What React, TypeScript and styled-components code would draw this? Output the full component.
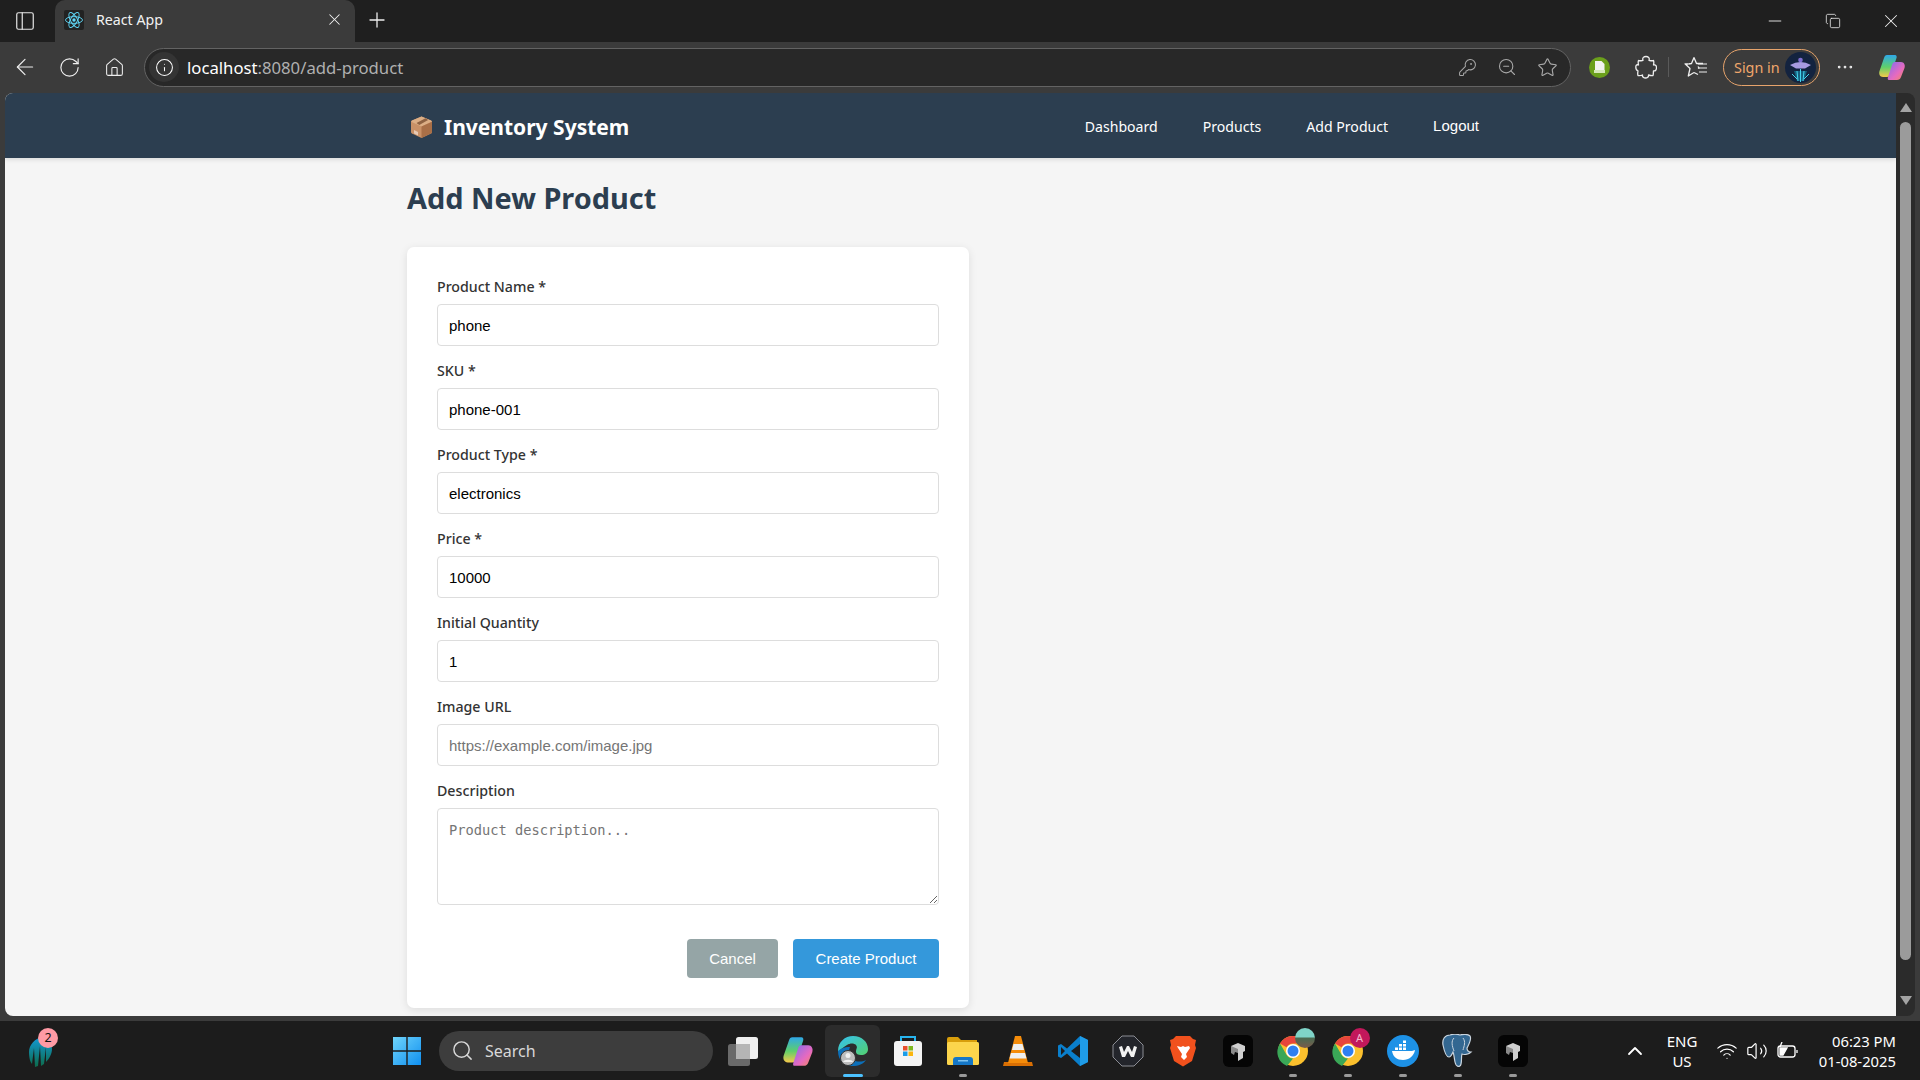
import React from "react";
import styled, { createGlobalStyle } from "styled-components";
import { ArrowLeft, RotateCw, Home, Info, KeyRound, ZoomOut, Star, X, Plus, Minus, Search, ChevronUp, Wifi, Volume2, MoreHorizontal, Copy, PanelLeft } from "lucide-react";

const Global = createGlobalStyle`
  html, body { margin: 0; padding: 0; height: 100%; overflow: hidden; background: #3b3b3b; }
  * { box-sizing: border-box; }
  ::placeholder { color: #757575; opacity: 1; }
`;

const UI = `"Noto Sans", "Open Sans", sans-serif`;
const ARIAL = `"Liberation Sans", Arial, sans-serif`;

const Screen = styled.div`
  width: 1920px; height: 1080px; display: flex; flex-direction: column; overflow: hidden;
  background: #3b3b3b; font-family: ${UI};
`;
const TabStrip = styled.div`
  height: 42px; flex: none; background: #1f1f1f; display: flex; align-items: stretch; color: #fff;
`;
const SideToggle = styled.div`
  width: 50px; margin-right: 5px; display: flex; align-items: center; justify-content: center; color: #e8e8e8;
`;
const Tab = styled.div`
  width: 300px; background: #3b3b3b; border-radius: 10px 10px 0 0; display: flex; align-items: center;
  padding: 0 11px 3px 9px; font-size: 14.2px; color: #f2f2f2;
`;
const TabTitle = styled.span`
  margin-left: 12px; flex: 1;
`;
const NewTab = styled.div`
  width: 44px; padding-bottom: 2px; display: flex; align-items: center; justify-content: center; color: #eee;
`;
const Spacer = styled.div`
  flex: 1;
`;
const WinBtn = styled.div`
  width: 58px; display: flex; align-items: center; justify-content: center; color: #eee;
`;
const Toolbar = styled.div`
  height: 51px; flex: none; background: #3b3b3b; display: flex; align-items: center; padding: 0 0 1px 2px; color: #eee;
`;
const ToolBtn = styled.div<{ $w?: number }>`
  width: ${p => p.$w ?? 45}px; height: 38px; flex: none; display: flex; align-items: center; justify-content: center;
`;
const Address = styled.div`
  width: 1427px; height: 39px; margin-left: 7px; flex: none; border: 1px solid #636363; border-radius: 20px; background: #282828;
  display: flex; align-items: center; padding: 0 3px 0 4px; color: #fff; font-size: 16.7px;
`;
const InfoChip = styled.div`
  width: 30px; height: 30px; border-radius: 50%; background: #343434; display: flex; align-items: center; justify-content: center; margin-right: 8px;
`;
const UrlHost = styled.span`
  color: #fff;
`;
const UrlRest = styled.span`
  color: #b0b0b0;
`;
const AddrIcon = styled.div`
  width: 40px; display: flex; justify-content: center; color: #a8a8a8;
`;
const Divider = styled.div`
  width: 1px; height: 20px; background: #5a5a5a; margin: 0 4px;
`;
const SignIn = styled.div`
  width: 97px; height: 37px; flex: none; border: 1px solid #e7a46c; border-radius: 19px; color: #f0a76c; font-size: 14.4px;
  display: flex; align-items: center; justify-content: space-between; padding: 0 3px 0 10px; margin-left: 4px;
`;
const ViewRow = styled.div`
  height: 923px; flex: none; display: flex; padding-left: 5px;
`;
const Page = styled.div`
  width: 1891px; height: 923px; background: #f5f5f5; border-radius: 8px 0 0 8px; overflow: hidden; display: flex; flex-direction: column;
`;
const NavBar = styled.nav`
  height: 65px; flex: none; background: #2c3e50; box-shadow: 0 2px 4px rgba(0,0,0,.1);
`;
const NavInner = styled.div`
  width: 1087px; height: 100%; margin: 0 auto; display: flex; align-items: center; justify-content: space-between; padding: 0 15px 0 3px;
`;
const Brand = styled.div`
  display: flex; align-items: center; gap: 11px; color: #fff; font-size: 21px; font-weight: 700; padding-top: 2px;
`;
const NavLinks = styled.div`
  display: flex; align-items: center; gap: 45px; padding-top: 1px;
`;
const NavLink = styled.a`
  color: #fff; font-size: 14.1px; text-decoration: none;
`;
const LogoutBtn = styled.button`
  background: none; border: 0; padding: 0 0 2px; color: #fff; font: 15px ${ARIAL};
`;
const Main = styled.main`
  width: 1087px; margin: 0 auto; padding-top: 20px;
`;
const Title = styled.h1`
  margin: 0 0 30px; height: 39px; line-height: 39px; font-size: 28.9px; font-weight: 700; color: #2c3e50;
`;
const Card = styled.form`
  width: 562px; height: 761px; background: #fff; border-radius: 7px; padding: 30px 30px 30px; box-shadow: 0 2px 9px rgba(0,0,0,.1);
`;
const Field = styled.div`
  margin-bottom: 15px;
`;
const Label = styled.label`
  display: block; height: 20px; line-height: 20px; margin-bottom: 7px; font-size: 14.2px; font-weight: 500; color: #333;
`;
const Input = styled.input`
  display: block; width: 502px; height: 42px; border: 1px solid #ddd; border-radius: 4px; padding: 0 11px; background: #fff;
  font: 15px ${ARIAL}; color: #000; outline: none;
`;
const TextArea = styled.textarea`
  display: block; width: 502px; height: 97px; border: 1px solid #ddd; border-radius: 4px; padding: 13px 11px 11px; background: #fff;
  font: 13.7px "DejaVu Sans Mono", monospace; color: #000; outline: none; resize: vertical;
`;
const Actions = styled.div`
  display: flex; justify-content: flex-end; gap: 15px; margin-top: 34px;
`;
const Button = styled.button<{ $primary?: boolean }>`
  height: 39px; width: ${p => (p.$primary ? 146 : 91)}px; border: 0; border-radius: 4px; color: #fff; font: 15px ${ARIAL};
  background: ${p => (p.$primary ? "#3498db" : "#95a5a6")};
`;
const ScrollBar = styled.div`
  width: 19px; height: 923px; flex: none; background: #2b2b2b; border-radius: 0 8px 8px 0; display: flex; flex-direction: column; align-items: center; padding: 10px 0 11px;
`;
const ScrollArrow = styled.div<{ $down?: boolean }>`
  width: 0; height: 0; flex: none; border-left: 6px solid transparent; border-right: 6px solid transparent;
  ${p => (p.$down ? "border-top: 9px solid #a3a3a3;" : "border-bottom: 9px solid #a3a3a3;")}
`;
const ScrollThumb = styled.div`
  width: 11px; height: 838px; margin: 10px 0 auto; border-radius: 6px; background: #9b9b9b; flex: none;
`;
const Taskbar = styled.div`
  height: 59px; margin-top: 5px; flex: none; background: #1c1c1c; display: grid; grid-template-columns: 1fr auto 1fr; align-items: center; color: #fff;
`;
const TaskLeft = styled.div`
  padding-left: 28px; display: flex; align-items: center;
`;
const TaskCenter = styled.div`
  display: flex; align-items: center; height: 100%; margin-left: -1px;
`;
const Slot = styled.div<{ $active?: boolean; $run?: boolean }>`
  position: relative; width: 55px; height: 52px; flex: none; display: flex; align-items: center; justify-content: center; border-radius: 6px;
  background: ${p => (p.$active ? "#2c2c2c" : "transparent")};
  &::after {
    content: ""; position: absolute; left: 50%; bottom: 0; height: 3px; border-radius: 2px; transform: translateX(-50%);
    width: ${p => (p.$active ? 20 : 8)}px;
    background: ${p => (p.$active ? "#4cc2ff" : p.$run ? "#9a9a9a" : "transparent")};
  }
`;
const SearchBox = styled.div`
  width: 274px; height: 40px; margin: 0 2px 0 5px; border-radius: 20px; background: #3d3d3d; display: flex; align-items: center; padding-left: 12px; gap: 11px;
  font-size: 16px; color: #d8d8d8; flex: none;
`;
const Tray = styled.div`
  display: flex; align-items: center; justify-content: flex-end; padding-right: 24px; height: 100%;
`;
const TrayIcon = styled.div<{ $w: number }>`
  width: ${p => p.$w}px; display: flex; justify-content: center;
`;
const LangBlock = styled.div`
  width: 60px; margin: 0 0 0 2px; text-align: center; font-size: 15px; line-height: 20px;
`;
const Clock = styled.div`
  width: 93px; text-align: right; font-size: 14.8px; line-height: 20px;
`;

const s = { strokeWidth: 1.3 };

const ReactFav = () => (
  <svg width="20" height="20" viewBox="0 0 20 20"><rect width="20" height="20" rx="2" fill="#222" />
    <g fill="none" stroke="#61dafb" strokeWidth=".9"><ellipse cx="10" cy="10" rx="8.500" ry="3.400" /><ellipse cx="10" cy="10" rx="8.500" ry="3.400" transform="rotate(60 10 10)" /><ellipse cx="10" cy="10" rx="8.500" ry="3.400" transform="rotate(120 10 10)" /></g>
    <circle cx="10" cy="10" r="1.700" fill="#61dafb" /></svg>
);
const BoxEmoji = () => (
  <svg width="23" height="24" viewBox="0 0 23 24">
    <path d="M11.500 1.500 21 5.500q1 .5 1 1.500v10q0 1-1 1.500L11.500 23 2 18.500q-1-.5-1-1.500V7q0-1 1-1.500z" fill="#c99167" />
    <path d="M11.500 1.500 21 5.500q1 .5 .8 1.200L11.500 11.500 1.200 6.700Q1 6 2 5.500z" fill="#dcae85" />
    <path d="M11.500 11.500 22 6.700V17q0 1-1 1.500L11.500 23z" fill="#a96f47" />
    <path d="M15.500 3.200 6.500 8l2.800 1.900 8.800-5z" fill="#8f6242" />
    <path d="M4 15l4 2v3.500l-4-2z" fill="#e7c9b4" />
  </svg>
);
const GreenExt = () => (
  <svg width="21" height="21" viewBox="0 0 21 21"><circle cx="10.500" cy="10.500" r="10.500" fill="#6b9f1c" /><path d="M6 4h6.500L15.500 7v6H6z" fill="#f2f2f2" /><rect x="5" y="13" width="11" height="3" fill="#d6e8b8" /></svg>
);
const PuzzleBlob = () => (
  <svg width="22" height="24" viewBox="0 0 22 24" fill="none" stroke="#eee" strokeWidth="1.300" strokeLinejoin="round">
    <path d="M8 5.500C7 2.500 9 1.500 11 1.500s4 1.200 3 4c1.500.5 3 .2 4.500 0 .5 1.500.3 3.300 0 4.500 2.500-.8 3 1.500 3 2.800 0 1.800-1 3.700-3 3-.2 1.700 0 3.400-.5 4.700-1.500.2-3-.1-4.500-.5.5 2-1.500 3-3 3s-3.500-1-3-3c-1.500.5-3 .8-4.500.5-.5-1.500-.3-3.200 0-4.700C1 15.500.8 13 .8 12s.5-3 2.700-2c-.3-1.300-.5-3 0-4.500 1.500.2 3 .5 4.500 0z" />
  </svg>
);
const Favorites = () => (
  <svg width="24" height="24" viewBox="0 0 24 24" fill="none" stroke="#eee" strokeWidth="1.300" strokeLinejoin="round">
    <path d="M10 2.500 12.500 8.500H19M14 11.500 15 13l-1 .5M4.500 9 1 8.800l5 4.700-1.700 7.500L10 17.500" />
    <path d="M4.500 9l3-.5L10 2.500M10 17.500l4 2" />
    <path d="M14 9h9M15 13h8M15 17h8" strokeWidth="1.200" />
  </svg>
);
const Avatar = () => (
  <svg width="31" height="31" viewBox="0 0 31 31"><circle cx="15.500" cy="15.500" r="15.500" fill="#13233f" />
    <path d="M5 13q10.500-6 21 0l-6 3.500h-9z" fill="#a79be0" /><path d="M9 19h13l-3 10h-7z" fill="#15607f" /><path d="M12 19l1 10M19 19l-1 10M15.500 17v13M7 22l5 5M24 22l-5 5" stroke="#45d3ee" strokeWidth="1" /><circle cx="15.500" cy="8" r="2.300" fill="#7f6ed0" /></svg>
);
const Copilot = ({ size = 28 }: { size?: number }) => (
  <svg width={size} height={size} viewBox="0 0 28 28"><defs>
    <linearGradient id="cpa" x1="0" y1="0" x2="0" y2="1"><stop offset="0" stopColor="#2fa8e8" /><stop offset=".55" stopColor="#5fcf6a" /><stop offset="1" stopColor="#f5c84a" /></linearGradient>
    <linearGradient id="cpb" x1="0" y1="0" x2="1" y2="1"><stop offset="0" stopColor="#7f6cf0" /><stop offset=".6" stopColor="#e66ac0" /><stop offset="1" stopColor="#f58a5a" /></linearGradient></defs>
    <path d="M9 2h8c1.500 0 2 1.500 1.500 3L13 21c-.8 2-2 3-4 3H5c-3 0-4.500-3-3.500-6L6 5c.6-2 1.500-3 3-3z" fill="url(#cpa)" />
    <path d="M17 9h6c3 0 4.500 3 3.500 6l-3.500 9c-.6 2-2 3-4 3h-8c-1.500 0-1.500-1.500-1-3l4-12c.5-2 1.500-3 3-3z" fill="url(#cpb)" /></svg>
);
const TideApp = () => (
  <svg width="26" height="34" viewBox="0 0 26 34"><defs><linearGradient id="td" x1="0" y1="0" x2="0" y2="1"><stop offset="0" stopColor="#139ad6" /><stop offset="1" stopColor="#0d6b4b" /></linearGradient></defs>
    <path d="M15 3C7 4 1 11 1 18c0 5 1 10 3 12l2-16 1 19 3-1 2-20 1 20 3-2 2-17 0 15c3-3 6-8 6-13C24 9 20 3 15 3z" fill="url(#td)" /></svg>
);
const Badge = styled.div`
  width: 20px; height: 20px; margin: -26px 0 0 -16px; border-radius: 50%; background: #ff9aa5; color: #111; font-size: 12.5px; text-align: center; line-height: 20px; position: relative;
`;
const WinLogo = () => (
  <svg width="30" height="30" viewBox="0 0 30 30"><defs><linearGradient id="wl" x1="0" y1="0" x2="1" y2="1"><stop offset="0" stopColor="#6fd4fb" /><stop offset="1" stopColor="#0f8ff0" /></linearGradient></defs>
    <path d="M1 1h13.300v13.300H1zM15.700 1H29v13.300H15.700zM1 15.700h13.300V29H1zM15.700 15.700H29V29H15.700z" fill="url(#wl)" /></svg>
);
const TaskView = () => (
  <svg width="32" height="32" viewBox="0 0 32 32"><rect x="9" y="2" width="22" height="22" rx="2.500" fill="#efefef" /><rect x="1" y="9" width="22" height="22" rx="2.500" fill="#6a6a6a" /><rect x="9" y="9" width="14" height="15" fill="#b5b5b5" /></svg>
);
const Edge = () => (
  <svg width="32" height="32" viewBox="0 0 32 32"><defs><linearGradient id="eg" x1="0" y1="0" x2="1" y2="1"><stop offset="0" stopColor="#35c1f1" /><stop offset="1" stopColor="#53d16f" /></linearGradient></defs>
    <path d="M1 16C1 7 8 1 16 1c9 0 15 6 15 13 0 4-3 6-7 6-3 0-5-1-5-3 0-4 2-4 0-7-2-2-6-2-9 0-5 3-8 7-9 6z" fill="url(#eg)" />
    <path d="M1 16c0 9 6 15 14 15 7 0 11-2 14-6-4 2-9 2-13 0-4-3-5-8-3-13-6 0-10 2-12 4z" fill="#0c6fb8" />
    <circle cx="11" cy="23" r="7.500" fill="#bdbdbd" stroke="#333" /><circle cx="11" cy="20.500" r="2.500" fill="#f0f0f0" /><path d="M6 27c1-3 9-3 10 0z" fill="#f0f0f0" /></svg>
);
const Store = () => (
  <svg width="32" height="32" viewBox="0 0 32 32"><path d="M9 6V2h14v4" fill="none" stroke="#27b4ee" strokeWidth="2" /><rect x="2" y="6" width="28" height="25" rx="3" fill="#f4f4f4" />
    <rect x="11" y="11" width="4.500" height="4.500" fill="#e8502d" /><rect x="16.500" y="11" width="4.500" height="4.500" fill="#7db81f" /><rect x="11" y="16.500" width="4.500" height="4.500" fill="#1a9ce8" /><rect x="16.500" y="16.500" width="4.500" height="4.500" fill="#fbb60f" /></svg>
);
const Files = () => (
  <svg width="32" height="30" viewBox="0 0 32 30"><path d="M0 3a2 2 0 0 1 2-2h9l3 3h16v6H0z" fill="#d89e0b" /><rect y="6" width="32" height="23" rx="1.500" fill="#fcd54c" /><path d="M6 24a3 3 0 0 1 3-3h14a3 3 0 0 1 3 3v5H6z" fill="#1577c7" /><rect x="11" y="24" width="10" height="1.500" fill="#7fc4f0" /></svg>
);
const Vlc = () => (
  <svg width="30" height="32" viewBox="0 0 30 32"><path d="M1 27h28l1 4H0z" fill="#d96f04" /><path d="M12 1h6l7 27H5z" fill="#f58c0a" /><path d="M10.500 9h9l1.500 6H9zM8 18h14l1.500 5.500h-17z" fill="#efefef" /></svg>
);
const VsCode = () => (
  <svg width="32" height="32" viewBox="0 0 32 32"><path d="M23 1 31 5v22l-8 4-13-12.500-6 4.500-3-1.500v-11l3-1.500 6 4.500z" fill="#0a7fcc" /><path d="M23 1 31 5v22l-8 4z" fill="#1f9ce8" /><path d="M23 9 14 16l9 7z" fill="#1c1c1c" /><path d="M4 12l4 4-4 4z" fill="#1c1c1c" /></svg>
);
const Wow = () => (
  <svg width="32" height="32" viewBox="0 0 32 32"><path d="M10 1h12l9 9v12l-9 9H10l-9-9V10z" fill="#23252b" stroke="#8b8d94" strokeWidth="1" /><path d="M7 12l3 10h3l3-6 3 6h3l3-10-3-1-2 6-3-6h-2l-3 6-2-6z" fill="#f2f2f2" /></svg>
);
const Brave = () => (
  <svg width="28" height="32" viewBox="0 0 28 32"><path d="M7 1h14l3 3 3 1-1 5 1 3-4 13-9 5.500L5 26 1 13l1-3-1-5 3-1z" fill="#f1511d" /><path d="M8 11l4 1 2-1 2 1 4-1 1 2-4 6 1 3-3 3-3-3 1-3-4-6z" fill="#fff" /></svg>
);
const BlackBox = () => (
  <svg width="30" height="32" viewBox="0 0 30 32"><rect width="30" height="32" rx="6" fill="#050505" /><path d="M8 11l7-3 7 3v5l-2 1v6l-5 3v-9z" fill="#cfcfcf" /><path d="M8 11l7 3v4l-3-1-1 3-3-2z" fill="#8a8a8a" /></svg>
);
const Chrome = () => (
  <svg width="32" height="32" viewBox="0 0 32 32"><circle cx="16" cy="16" r="15" fill="#fbc02d" /><path d="M16 1a15 15 0 0 1 13 7.500H16a7.500 7.500 0 0 0-6.500 3.800L3 8.500A15 15 0 0 1 16 1z" fill="#e8453c" /><path d="M3 8.500l6.500 11.300a7.500 7.500 0 0 0 6.500 3.700L10 31A15 15 0 0 1 3 8.500z" fill="#3aa757" /><circle cx="16" cy="16" r="7" fill="#fff" /><circle cx="16" cy="16" r="5.500" fill="#2f7ff0" /></svg>
);
const Docker = () => (
  <svg width="32" height="32" viewBox="0 0 32 32"><circle cx="16" cy="16" r="16" fill="#1d91e6" /><path d="M5 16h20c1 0 2-1 3-1-1 6-6 10-12 10-6 0-10-3-11-9z" fill="#fff" /><path d="M8 12.500h3V15H8zM12 12.500h3V15h-3zM16 12.500h3V15h-3zM12 9h3v2.500h-3zM16 9h3v2.500h-3zM16 5.500h3V8h-3z" fill="#fff" /></svg>
);
const Postgres = () => (
  <svg width="32" height="34" viewBox="0 0 32 34"><path d="M8 1C3 1 0 5 1 11c1 5 3 12 6 12 2 0 3-3 4-5 1 2 1 5 2 10s5 6 6 2 0-8 1-10c3 1 7 0 9-2-3 0-4-1-4-4 2-4 5-9 3-12-2-2-7-2-10-1-3-1-7-1-10 0z" fill="#336791" stroke="#c9d4de" strokeWidth="1.200" /><path d="M12 4c-3 3-2 8 0 13M21 4c3 4 1 8 0 12" fill="none" stroke="#c9d4de" strokeWidth="1" /></svg>
);
const PinnedIcon = styled.div`
  position: relative; width: 32px; height: 32px;
`;
const ProfileDot = styled.div`
  position: absolute; right: -6px; top: -7px; width: 20px; height: 20px; border-radius: 50%; background: #c2185b; color: #f4b6cc; font-size: 11px; line-height: 20px; text-align: center;
`;
const LandscapeDot = styled.div`
  position: absolute; right: -6px; top: -7px; width: 20px; height: 20px; border-radius: 50%; background: linear-gradient(#7fd4c8 45%, #4a6b52 50%, #7a5a4a);
`;
const Battery = () => (
  <svg width="24" height="18" viewBox="0 0 24 18" fill="none" stroke="#fff" strokeWidth="1.300"><rect x="2" y="4" width="17" height="11" rx="2.500" /><path d="M21 8v3" /><path d="M4 13V6h7l-4 7z" fill="#fff" /><path d="M6 0 4 5" /></svg>
);

const fields = [
  { label: "Product Name *", value: "phone" },
  { label: "SKU *", value: "phone-001" },
  { label: "Product Type *", value: "electronics" },
  { label: "Price *", value: "10000" },
  { label: "Initial Quantity", value: "1" },
  { label: "Image URL", placeholder: "https://example.com/image.jpg" },
];

export default function App() {
  return (
    <Screen>
      <Global />
      <TabStrip>
        <SideToggle><PanelLeft size={22} {...s} /></SideToggle>
        <Tab><ReactFav /><TabTitle>React App</TabTitle><X size={19} {...s} /></Tab>
        <NewTab><Plus size={24} {...s} /></NewTab>
        <Spacer />
        <WinBtn><Minus size={20} strokeWidth={1.1} /></WinBtn>
        <WinBtn><Copy size={16} strokeWidth={1.2} /></WinBtn>
        <WinBtn><X size={22} strokeWidth={1.1} /></WinBtn>
      </TabStrip>
      <Toolbar>
        <ToolBtn><ArrowLeft size={26} strokeWidth={1.1} /></ToolBtn>
        <ToolBtn><RotateCw size={23} strokeWidth={1.2} /></ToolBtn>
        <ToolBtn><Home size={21} strokeWidth={1.2} /></ToolBtn>
        <Address>
          <InfoChip><Info size={19} {...s} /></InfoChip>
          <UrlHost>localhost</UrlHost><UrlRest>:8080/add-product</UrlRest>
          <Spacer />
          <AddrIcon><KeyRound size={19} {...s} /></AddrIcon>
          <AddrIcon><ZoomOut size={20} {...s} /></AddrIcon>
          <AddrIcon><Star size={21} {...s} /></AddrIcon>
        </Address>
        <ToolBtn $w={56}><GreenExt /></ToolBtn>
        <ToolBtn $w={37}><PuzzleBlob /></ToolBtn>
        <Divider />
        <ToolBtn $w={46}><Favorites /></ToolBtn>
        <SignIn>Sign in<Avatar /></SignIn>
        <ToolBtn $w={49}><MoreHorizontal size={20} {...s} /></ToolBtn>
        <ToolBtn $w={46}><Copilot /></ToolBtn>
      </Toolbar>
      <ViewRow>
        <Page>
          <NavBar>
            <NavInner>
              <Brand><BoxEmoji />Inventory System</Brand>
              <NavLinks>
                <NavLink>Dashboard</NavLink>
                <NavLink>Products</NavLink>
                <NavLink>Add Product</NavLink>
                <LogoutBtn type="button">Logout</LogoutBtn>
              </NavLinks>
            </NavInner>
          </NavBar>
          <Main>
            <Title>Add New Product</Title>
            <Card>
              {fields.map(f => (
                <Field key={f.label}>
                  <Label>{f.label}</Label>
                  <Input readOnly defaultValue={f.value} placeholder={f.placeholder} />
                </Field>
              ))}
              <Label>Description</Label>
              <TextArea readOnly placeholder="Product description..." />
              <Actions>
                <Button type="button">Cancel</Button>
                <Button type="button" $primary>Create Product</Button>
              </Actions>
            </Card>
          </Main>
        </Page>
        <ScrollBar>
          <ScrollArrow />
          <ScrollThumb />
          <ScrollArrow $down />
        </ScrollBar>
      </ViewRow>
      <Taskbar>
        <TaskLeft><TideApp /><Badge>2</Badge></TaskLeft>
        <TaskCenter>
          <Slot><WinLogo /></Slot>
          <SearchBox><Search size={23} strokeWidth={1.5} />Search</SearchBox>
          <Slot><TaskView /></Slot>
          <Slot><Copilot size={32} /></Slot>
          <Slot $active><Edge /></Slot>
          <Slot><Store /></Slot>
          <Slot $run><Files /></Slot>
          <Slot><Vlc /></Slot>
          <Slot><VsCode /></Slot>
          <Slot><Wow /></Slot>
          <Slot><Brave /></Slot>
          <Slot><BlackBox /></Slot>
          <Slot $run><PinnedIcon><Chrome /><LandscapeDot /></PinnedIcon></Slot>
          <Slot $run><PinnedIcon><Chrome /><ProfileDot>A</ProfileDot></PinnedIcon></Slot>
          <Slot $run><Docker /></Slot>
          <Slot $run><Postgres /></Slot>
          <Slot $run><BlackBox /></Slot>
        </TaskCenter>
        <Tray>
          <TrayIcon $w={30}><ChevronUp size={24} strokeWidth={1.8} /></TrayIcon>
          <LangBlock>ENG<br />US</LangBlock>
          <TrayIcon $w={30}><Wifi size={22} {...s} /></TrayIcon>
          <TrayIcon $w={30}><Volume2 size={22} {...s} /></TrayIcon>
          <TrayIcon $w={31}><Battery /></TrayIcon>
          <Clock>06:23 PM<br />01-08-2025</Clock>
        </Tray>
      </Taskbar>
    </Screen>
  );
}
